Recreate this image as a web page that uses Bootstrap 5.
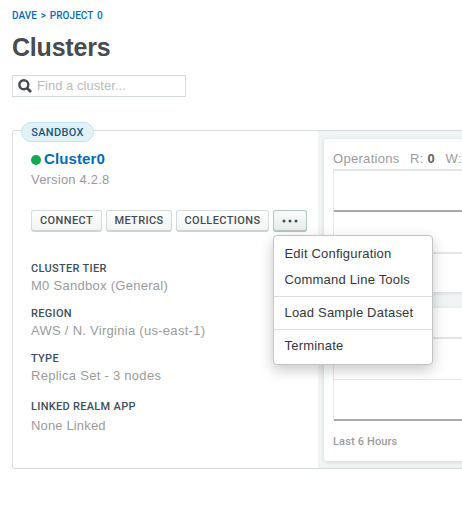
<!DOCTYPE html>
<html lang="en">
<head>
<meta charset="utf-8">
<meta name="viewport" content="width=device-width, initial-scale=1">
<title>Clusters</title>
<link href="https://cdn.jsdelivr.net/npm/bootstrap@5.3.0/dist/css/bootstrap.min.css" rel="stylesheet">
<style>
body{font-family:"Liberation Sans",Arial,sans-serif;font-size:13px;line-height:18px;color:#3d4247;background:#fff;overflow:hidden;height:514px}
a{color:#006cbc;text-decoration:none}
.caps{font-family:Roboto,sans-serif;font-weight:500;font-size:11px;line-height:14px}
.crumbs{font-size:10px;line-height:14px;padding:9px 0 0 12px;height:32px;letter-spacing:.06px;word-spacing:1.2px}
.page-title{font-size:25px;line-height:30px;font-weight:700;color:#464c4f;margin:0 0 13px 12px;letter-spacing:-.2px}
.search{width:174px;height:22px;margin-left:12px;border:1px solid #d5dbdb;padding-left:5px}
.search input{font-size:13px;width:140px;padding:0 0 0 5px;line-height:18px;min-height:0;letter-spacing:.04px}
.search input::placeholder{color:#b8bcbd;opacity:1}
.cluster{margin:33px 0 0 12px;width:470px;height:339px;border:1px solid #d5dbdb;border-radius:3px}
.summary{width:305px;padding:0 0 0 18px;flex:none}
.tier{left:8px;top:-9px;width:73px;height:20px;border:1px solid #c5e4f2;background:#e1f2f6;border-radius:10px;color:#1a567e;letter-spacing:.3px;padding-top:1px}
.cname{margin-top:18px;height:20px;font-size:15px;line-height:20px;font-weight:700;letter-spacing:.1px}
.dot{width:10px;height:10px;background:#13aa52;margin:2px 3px 0 0}
.soft{color:#9b9b9b}
.vers{padding-top:2px;letter-spacing:.2px}
.btns{margin-top:21px;gap:4px}
.tool{height:22px;padding:1px 0 0;border:1px solid #d5dbdb;border-bottom:2px solid #cdd4d4;border-radius:3px;background:linear-gradient(#fff,#f1f2f2);color:#464c4f;line-height:18px;letter-spacing:.38px}
.tool.on,.tool.on:hover{border-color:#b4c6c1;background:linear-gradient(#f9fbfa,#e6edeb)}
.w1{width:71px}.w2{width:66px}.w3{width:93px}.w4{width:34px}
.facts{margin-top:30px}
.facts dt{color:#3d4f58;height:15px;letter-spacing:.3px}
.facts dd{height:18px;margin:0 0 12px;letter-spacing:.28px}
.facts dd.roomy{margin-bottom:15px}
.facts dd.lower{padding-top:2px;letter-spacing:.15px}
.graphs{background:#f1f4f4;padding:8px 0 0 6px}
.panel{height:153px;background:#fff;border-radius:3px;padding-left:9px;box-shadow:0 1px 4px rgba(0,0,0,.12)}
.panel + .panel{margin-top:16px;padding-top:29px}
.ops{height:30px;padding-top:11px;letter-spacing:.3px}
.ops b{color:#5b6164}
.ops .rw{margin-left:6.5px}
.plot{border-left:1px solid #e5e7e7;border-top:2px solid #e3e5e5}
.plot .base{height:41px;border-bottom:2px solid #aaa}
.plot .rule{height:41px;border-bottom:1px solid #e5e7e7}
.plot .rule.first{height:42px;border-bottom-width:2px}
.plot .tail{height:39px}
.last{padding-top:14px;letter-spacing:.15px}
.actions{left:260px;top:104px;width:160px;height:130px;font-size:13px;line-height:18px;padding:9px 0 0;border:1px solid #c2c5c6;border-radius:4px;box-shadow:0 5px 14px rgba(0,0,0,.22);min-width:0;letter-spacing:.2px}
.actions .dropdown-item{color:#32373a;padding:0 0 0 10.5px;line-height:18px;height:18px}
.actions .dropdown-item.gap8{margin-bottom:8px}
.actions hr{margin:7px 0;border-color:#d9dddd;opacity:1}
</style>
<script src="https://cdn.jsdelivr.net/npm/bootstrap@5.3.0/dist/js/bootstrap.bundle.min.js"></script>
</head>
<body>
<nav class="crumbs caps"><a href="#">DAVE</a> <a href="#">&gt;</a> <a href="#">PROJECT 0</a></nav>
<h1 class="page-title">Clusters</h1>
<div class="search d-flex align-items-center">
<svg width="14" height="14" viewBox="0 0 14 14" fill="none" stroke="#464c4f"><circle cx="5.8" cy="5.8" r="4.5" stroke-width="2.4"/><path d="M9.2 9.2 13 13" stroke-width="2.8"/></svg>
<input class="form-control border-0 bg-transparent shadow-none" placeholder="Find a cluster..." aria-label="Find a cluster">
</div>
<main class="cluster position-relative d-flex">
<span class="tier caps position-absolute d-flex align-items-center justify-content-center">SANDBOX</span>
<section class="summary">
<div class="cname d-flex align-items-center"><span class="dot rounded-circle"></span><a href="#">Cluster0</a></div>
<div class="soft vers">Version 4.2.8</div>
<div class="btns d-flex">
<button class="btn tool caps w1">CONNECT</button><button class="btn tool caps w2">METRICS</button><button class="btn tool caps w3">COLLECTIONS</button><button class="btn tool on w4 d-flex align-items-center justify-content-center" aria-label="More"><svg width="16" height="4" fill="#3d4f58"><circle cx="2" cy="2" r="1.5"/><circle cx="8" cy="2" r="1.5"/><circle cx="14" cy="2" r="1.5"/></svg></button>
</div>
<dl class="facts mb-0">
<dt class="caps">CLUSTER TIER</dt><dd class="soft">M0 Sandbox (General)</dd>
<dt class="caps">REGION</dt><dd class="soft">AWS / N. Virginia (us-east-1)</dd>
<dt class="caps">TYPE</dt><dd class="soft roomy">Replica Set - 3 nodes</dd>
<dt class="caps">LINKED REALM APP</dt><dd class="soft lower">None Linked</dd>
</dl>
</section>
<section class="graphs flex-grow-1">
<div class="panel"><div class="ops soft text-nowrap">Operations <span class="rw">R: <b>0</b></span> <span class="rw">W:</span></div>
<div class="plot"><div class="base"></div><div class="rule first"></div><div class="tail"></div></div></div>
<div class="panel"><div class="plot"><div class="rule"></div><div class="base"></div></div><div class="soft last caps">Last 6 Hours</div></div>
</section>
<div class="actions dropdown-menu show">
<a class="dropdown-item gap8" href="#">Edit Configuration</a><a class="dropdown-item" href="#">Command Line Tools</a><hr><a class="dropdown-item" href="#">Load Sample Dataset</a><hr><a class="dropdown-item" href="#">Terminate</a>
</div>
</main>
</body>
</html>
